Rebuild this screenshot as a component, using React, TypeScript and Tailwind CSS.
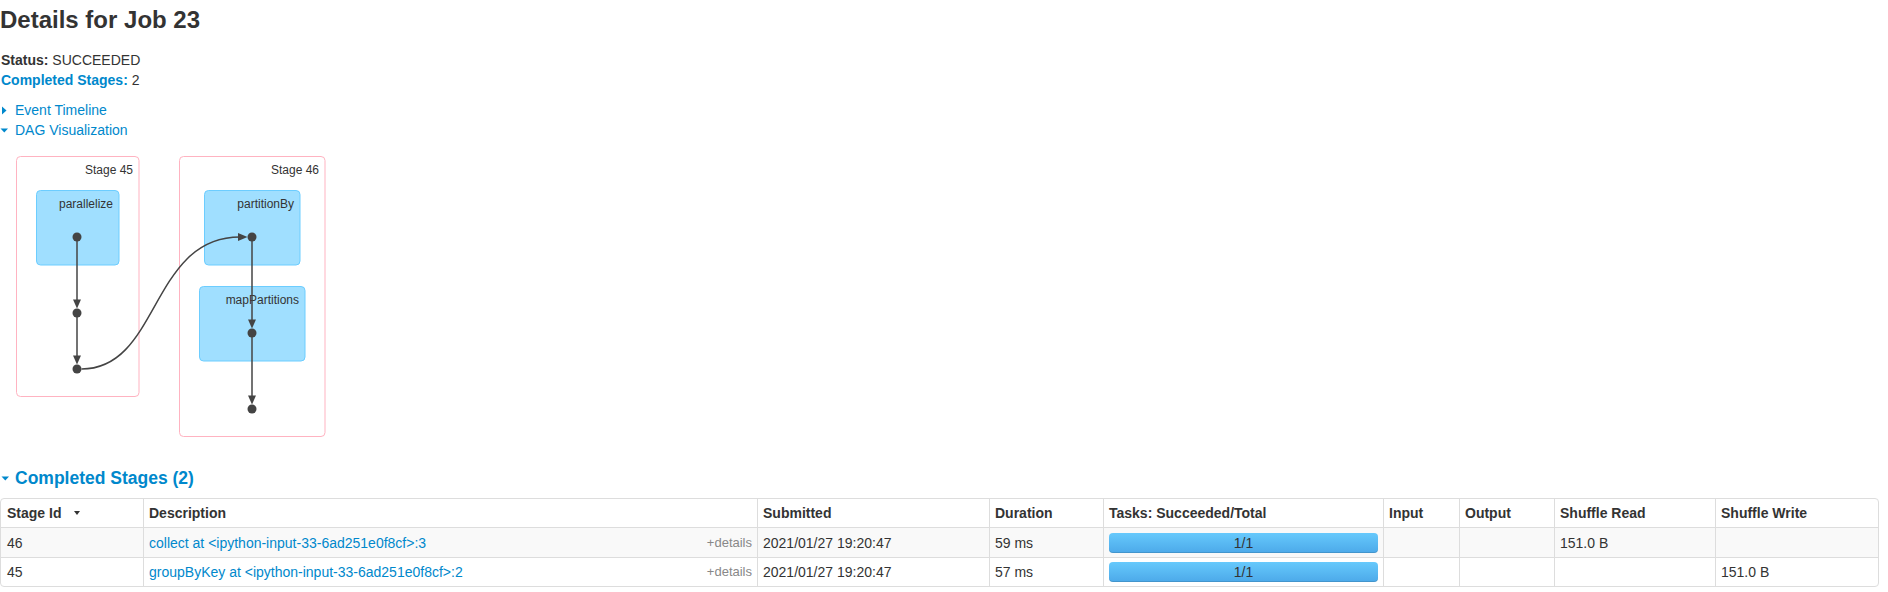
import React from 'react';

const linkBlue = 'text-[#0088cc]';

interface StageRow {
  id: string;
  description: string;
  submitted: string;
  duration: string;
  shuffleRead: string;
  shuffleWrite: string;
}

const rows: StageRow[] = [
  {
    id: '46',
    description: 'collect at <ipython-input-33-6ad251e0f8cf>:3',
    submitted: '2021/01/27 19:20:47',
    duration: '59 ms',
    shuffleRead: '151.0 B',
    shuffleWrite: '',
  },
  {
    id: '45',
    description: 'groupByKey at <ipython-input-33-6ad251e0f8cf>:2',
    submitted: '2021/01/27 19:20:47',
    duration: '57 ms',
    shuffleRead: '',
    shuffleWrite: '151.0 B',
  },
];

function CaretRight() {
  return (
    <svg width="8" height="20" viewBox="0 0 8 20" className="shrink-0">
      <polygon points="2,6.5 6.5,10.5 2,14.5" fill="#0088cc" />
    </svg>
  );
}

function CaretDown({ className = '' }: { className?: string }) {
  return (
    <svg width="9" height="20" viewBox="0 0 9 20" className={`shrink-0 ${className}`}>
      <polygon points="0.5,8.5 8,8.5 4.25,12.5" fill="#0088cc" />
    </svg>
  );
}

function VArrow({ x, y1, y2 }: { x: number; y1: number; y2: number }) {
  return (
    <g>
      <line x1={x} y1={y1} x2={x} y2={y2 - 4} stroke="#444" strokeWidth={1.5} />
      <polygon points={`${x - 4},${y2 - 9} ${x + 4},${y2 - 9} ${x},${y2}`} fill="#444" />
    </g>
  );
}

function DagViz() {
  const dots: [number, number][] = [
    [77, 237],
    [77, 313],
    [77, 369],
    [252, 237],
    [252, 333],
    [252, 409],
  ];
  return (
    <svg
      width="340"
      height="328"
      viewBox="0 140 340 328"
      className="block font-['Liberation_Sans',Arial,sans-serif]"
    >
      {/* stage 45 */}
      <rect x={16.5} y={156.5} width={122.5} height={240} rx={4} fill="#fff" stroke="#ffb3c1" />
      <text x={133} y={174} textAnchor="end" fontSize={12} fill="#333">
        Stage 45
      </text>
      <rect x={36.5} y={190.5} width={82.5} height={74.5} rx={4} fill="#a0dfff" stroke="#6ccdff" />
      <text x={113} y={208} textAnchor="end" fontSize={12} fill="#333">
        parallelize
      </text>

      {/* stage 46 */}
      <rect x={179.5} y={156.5} width={145.5} height={280} rx={4} fill="#fff" stroke="#ffb3c1" />
      <text x={319} y={174} textAnchor="end" fontSize={12} fill="#333">
        Stage 46
      </text>
      <rect x={204.5} y={190.5} width={95.5} height={74.5} rx={4} fill="#a0dfff" stroke="#6ccdff" />
      <text x={294} y={208} textAnchor="end" fontSize={12} fill="#333">
        partitionBy
      </text>
      <rect x={199.5} y={286.5} width={105.5} height={74.5} rx={4} fill="#a0dfff" stroke="#6ccdff" />
      <text x={299} y={304} textAnchor="end" fontSize={12} fill="#333">
        mapPartitions
      </text>

      {/* edges */}
      <VArrow x={77} y1={241} y2={308.5} />
      <VArrow x={77} y1={317} y2={364.5} />
      <VArrow x={252} y1={241} y2={328.5} />
      <VArrow x={252} y1={337} y2={404.5} />
      <path
        d="M81.5,369 C160,369 150,237 240,237"
        fill="none"
        stroke="#444"
        strokeWidth={1.5}
      />
      <polygon points="238,233 238,241 247.5,237" fill="#444" />

      {dots.map(([cx, cy]) => (
        <circle key={`${cx}-${cy}`} cx={cx} cy={cy} r={4.5} fill="#444" />
      ))}
    </svg>
  );
}

function TaskBar() {
  return (
    <div className="h-5 rounded-[4px] bg-linear-to-b from-[#66c9fc] to-[#4ca9e9] text-center leading-5 shadow-[inset_0_-1px_0_rgba(0,0,0,0.12)]">
      1/1
    </div>
  );
}

export default function App() {
  const th = 'border-l border-[#ddd] px-[5px] text-left font-bold align-middle';
  const td = 'border-l border-t border-[#ddd] px-[5px] align-middle';

  return (
    <div className="w-[1888px] h-[592px] overflow-hidden bg-white text-[14px] leading-5 text-[#333] font-['Liberation_Sans',Arial,sans-serif]">
      <h3 className="text-[24px] leading-[40px] font-bold">Details for Job 23</h3>

      <ul className="mt-[10px] pl-px">
        <li>
          <strong>Status:</strong> SUCCEEDED
        </li>
        <li>
          <a className={`${linkBlue} font-bold`}>Completed Stages:</a> 2
        </li>
      </ul>

      <div className="mt-[10px]">
        <div className="flex items-center">
          <CaretRight />
          <a className={`ml-[7px] ${linkBlue}`}>Event Timeline</a>
        </div>
        <div className="flex items-center">
          <CaretDown />
          <a className={`ml-[6px] ${linkBlue}`}>DAG Visualization</a>
        </div>
      </div>

      <DagViz />

      <h4 className="flex items-center text-[17.5px] leading-5 font-bold">
        <CaretDown className="ml-px" />
        <a className={`ml-[5px] ${linkBlue}`}>Completed Stages (2)</a>
      </h4>

      <div className="mt-[10px] w-[1879px] overflow-hidden rounded-[4px] border border-[#ddd]">
        <table className="w-full table-fixed border-separate border-spacing-0">
          <thead>
            <tr className="h-[28px]">
              <th className="w-[142px] px-[6px] text-left font-bold align-middle">
                <span className="inline-flex items-center">
                  Stage Id
                  <svg width="6" height="4" viewBox="0 0 6 4" className="ml-[13px]">
                    <polygon points="0,0 6,0 3,4" fill="#333" />
                  </svg>
                </span>
              </th>
              <th className={`w-[614px] ${th}`}>Description</th>
              <th className={`w-[232px] ${th}`}>Submitted</th>
              <th className={`w-[114px] ${th}`}>Duration</th>
              <th className={`w-[280px] ${th}`}>Tasks: Succeeded/Total</th>
              <th className={`w-[76px] ${th}`}>Input</th>
              <th className={`w-[95px] ${th}`}>Output</th>
              <th className={`w-[161px] ${th}`}>Shuffle Read</th>
              <th className={th}>Shuffle Write</th>
            </tr>
          </thead>
          <tbody>
            {rows.map((r, i) => (
              <tr key={r.id} className={i === 0 ? 'h-[30px] bg-[#f9f9f9]' : 'h-[29px]'}>
                <td className="border-t border-[#ddd] px-[6px] align-middle">{r.id}</td>
                <td className={td}>
                  <div className="flex items-center justify-between">
                    <a className={linkBlue}>{r.description}</a>
                    <span className="text-[13px] text-[#888]">+details</span>
                  </div>
                </td>
                <td className={td}>{r.submitted}</td>
                <td className={td}>{r.duration}</td>
                <td className={td}>
                  <TaskBar />
                </td>
                <td className={td}></td>
                <td className={td}></td>
                <td className={td}>{r.shuffleRead}</td>
                <td className={td}>{r.shuffleWrite}</td>
              </tr>
            ))}
          </tbody>
        </table>
      </div>
    </div>
  );
}
